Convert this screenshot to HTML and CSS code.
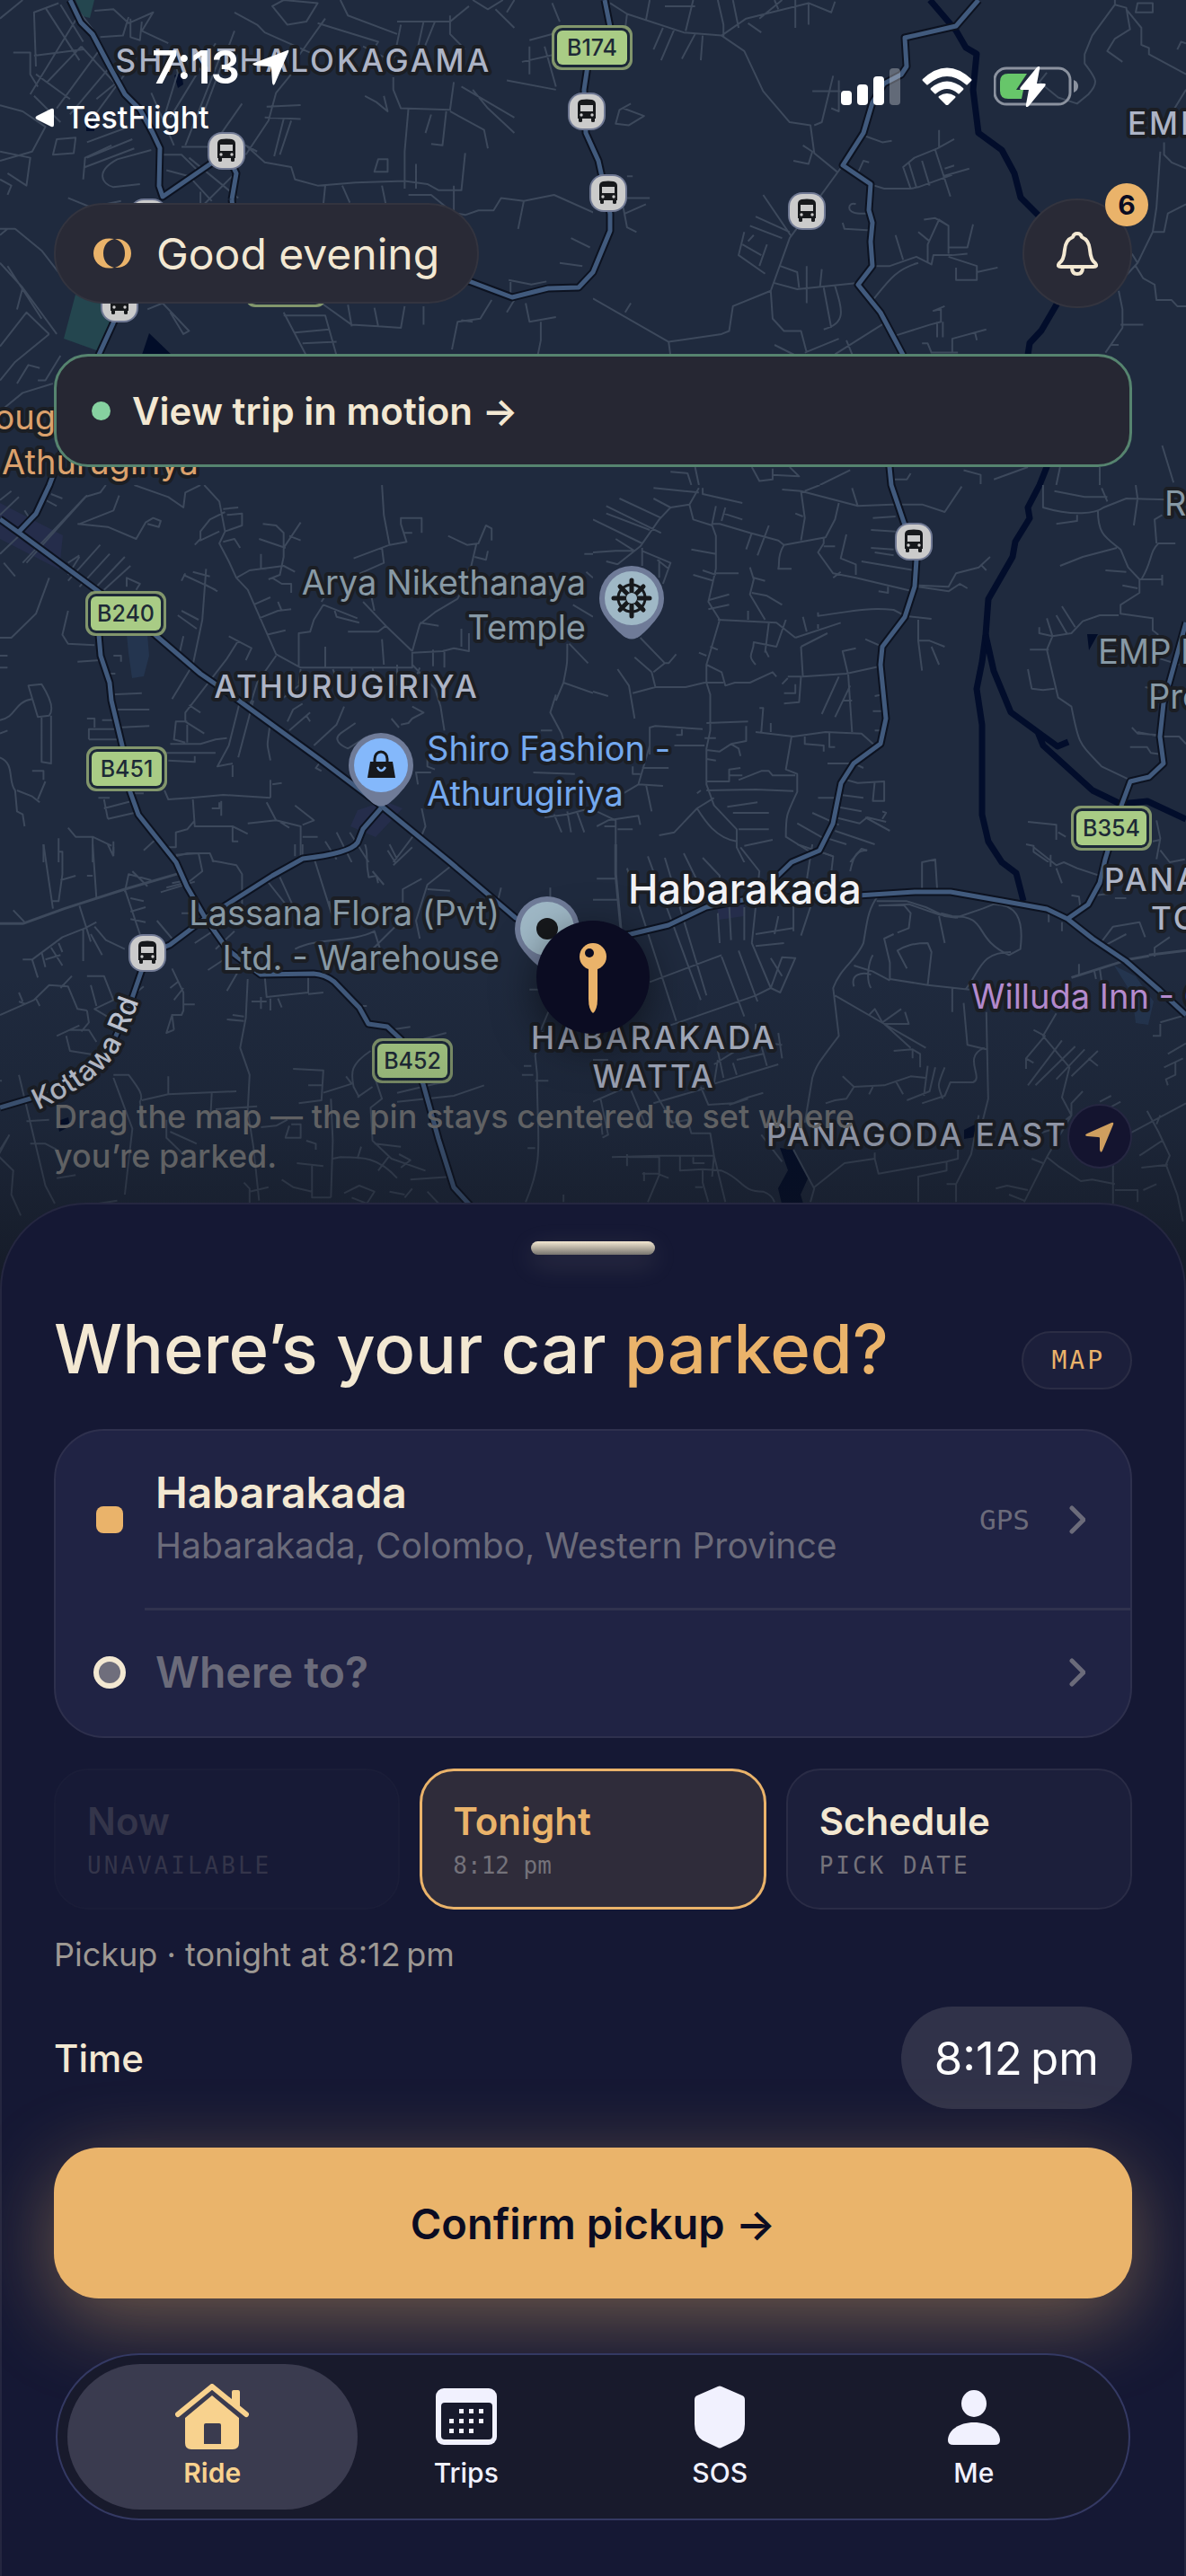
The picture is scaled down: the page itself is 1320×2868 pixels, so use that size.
FILE: index.html
```html
<!DOCTYPE html>
<html lang="en">
<head>
  <meta charset="UTF-8">
  <meta name="viewport" content="width=device-width, initial-scale=1">
  <title>Ride</title>
  <link rel="stylesheet" href="styles.css">
</head>
<body>
<div class="screen">

  <main class="stage">
    <!-- map background -->
    <svg class="map" viewBox="0 0 1320 1440" preserveAspectRatio="xMidYMin slice" aria-label="Map around Habarakada">
      <defs>
        <symbol id="bus" viewBox="0 0 44 44">
          <rect x="1" y="1" width="42" height="42" rx="16" fill="#6f7893"/>
          <rect x="3" y="3" width="38" height="38" rx="14" fill="#cbcbcb"/>
          <path fill="#17191c" d="M12 14q0-4 4-5 6-1 12 0 4 1 4 5v16h-1v3q0 1-2 1t-2-1v-3H17v3q0 1-2 1t-2-1v-3h-1z"/>
          <path fill="#cbcbcb" d="M15 15h14v7H15z"/>
          <circle cx="16" cy="26" r="1.700" fill="#cbcbcb"/>
          <circle cx="28" cy="26" r="1.700" fill="#cbcbcb"/>
        </symbol>
        <symbol id="shield" viewBox="0 0 90 50">
          <rect width="90" height="50" rx="11" fill="#82966c"/>
          <rect x="3" y="3" width="84" height="44" rx="9" fill="#1c2838"/>
          <rect x="6" y="6" width="78" height="38" rx="6" fill="#a9cc85"/>
        </symbol>
        <path id="pin" d="M36 0a36 36 0 0 1 36 36c0 14-8 23-16 32-6 6-10 10-14 12q-6 3-12 0c-4-2-8-6-14-12C8 59 0 50 0 36A36 36 0 0 1 36 0z"/>
        <path id="kottawa" d="M42 1236Q108 1206 130 1172Q146 1142 160 1098"/>
        <linearGradient id="fade" x1="0" y1="0" x2="0" y2="1">
          <stop offset="0" stop-color="#10131c" stop-opacity="0"/>
          <stop offset=".5" stop-color="#10131c" stop-opacity=".2"/>
          <stop offset="1" stop-color="#10131c" stop-opacity=".68"/>
        </linearGradient>
        <g id="main-roads">
          <path d="M78 0L90 25 103 38 122 74 139 105 156 122 170 148 178 165 177 207 181 219 229 186 252 170 263 193 258 222"/>
          <path d="M258 222L262 260 400 290 522 313 570 331 610 321 644 320 660 303 679 257 679 238 666 179 652 148 650 100 656 60"/>
          <path d="M681 40L673 0M133 340L126 360 110 395 55 540 40 572 21 592"/>
          <path d="M0 578L21 593 109 658 173 707 223 750 252 770 358 847 424 897 501 960 574 1022 640 1050 702 1040 744 1030 786 1010 837 1000 955 997 1018 993 1058 993 1115 1003 1165 1012 1188 1023 1216 1045 1253 1070 1291 1103 1320 1130"/>
          <path d="M424 900L404 923 398 938Q390 950 337 956L303 975 229 1022 189 1052 164 1062 145 1117 126 1160 101 1193 34 1223 0 1233"/>
          <path d="M110 707L112 730 122 760 124 780 136 830 145 882 154 907 196 960 208 987 229 1023 253 1057 290 1085 349 1084Q362 1085 372 1093L400 1122 410 1140 431 1143 446 1157 471 1207 488 1268 505 1322 526 1345"/>
          <path d="M1089 0L1064 29 1007 42 1009 74 1003 83 984 93 971 114 961 148 938 184 969 205 967 234 971 248 969 269 971 296 955 317 980 348 1005 395 990 520 992 540 1020 623 1018 653 1007 687 982 720 980 740 986 800 980 828 950 850 936 872 927 917 912 947 881 960 850 990"/>
          <path d="M1320 693L1295 783 1291 820 1295 850 1279 865 1258 870 1248 897 1230 957 1224 983 1211 1007 1188 1023"/>
        </g>
      </defs>

      <rect width="1320" height="1440" fill="#1f2a3e"/>

      <!-- parks, water and built-up areas -->
      <path class="park" d="M84 328l53 9-27 54-39-14zM84 0h21l-5 20-8-2z"/>
      <path class="pond" d="M141 706h23l2 24-6 23-13 2-4-28zM1240 1075l24 12 20 28-6 26-14-2-4-32z"/>
      <path class="town" d="M0 560l70 36-4 38L0 600zM398 902l30-10 20 8-30 32-28-12zM798 1008h30v12l-28 4z"/>
      <path class="lake" d="M868 1278l15 2 17 30-9 20 3 10h-24l-4-17 11-20zM158 395l8-24 25 24zM1210 706h12l-10 18zM64 1248l12-4 2 10-12 6zM194 84l8-4 2 14-6 4zM1073 1258l12-6v14l-12 2zM96 135h9v11h-9z"/>
      <path class="river" d="M1035 0L1064 34 1075 53 1087 60 1083 100 1089 148 1115 167 1129 193 1136 220 1157 241 1190 290 1176 339 1159 368 1146 382 1144 395 1165 520 1157 540 1144 565 1146 577 1130 603 1127 620 1100 667 1097 707 1093 737 1087 767 1093 807 1093 907 1100 937 1115 960 1131 972 1139 1003"/>
      <path class="river" d="M1097 707L1106 747 1125 793 1155 815 1161 830 1216 880 1247 895 1277 892 1320 912M1155 815l22 16 12-5"/>

      <svg x="0" y="0" width="660" height="540" viewBox="0 0 1568 1568" preserveAspectRatio="none">
        <path class="street" d="M0 60l60-60M95 215L90 40 155 10M120 25l90 170M160 15l60 120M185 0l60 95M90 180l130-20M250 35l50-5 40 45 65-35-30 60 70 40M265 120l60-5 15-60M345 60v60l25 10 5-60M80 305l130-260M95 240l90 80M125 265l90-115M215 150l90 120-50 50M150 350l120-200M185 370l110-160M240 390l90-150M160 395L90 310M35 170h45v70l20 40M0 340l60 20 60 50-35 80-85 30M0 490l80 20-10 90-50-40M140 500l10-50 50-5-5 50zM225 540l130-60M230 510l120-60M230 460l110-50M220 580l5-70 70-40M400 485l-90 30c-60 40-40 80-10 90l70-10M430 395l40-160-10-60M400 300l60 170M450 380l120-240M490 470l90-280M540 360l80-260M480 475h80l80-140M500 510l130 130M440 550l60 20 60 80M430 500h50l50 60M540 660l90-110M650 500l60-110 20-90 60-90M680 490l-30-20 50 55 70 15 10 40 60 20 100-10 130-5 60 10 30 20h60l10-120M700 380l95 5M705 345l90-5M750 385l-25 120M770 390l-30 110M1070 610v-120l10-140M1040 250v40l20 60 130 5 10-90M1180 360l-10 110-30-5M1140 370l-15 60M1190 360l90 60 10 60M1250 290l40 60 70 80M1220 280l140 100M1340 260l130 30M965 310l30 20 30 30-10-50M1000 515h25v40h-35zM1010 600l10 60M1100 530v80M1200 600v90l-60-60h-60M860 600l-5 60M905 600l20 55M720 20l30-20 90 10-30 60-50 10zM840 75l160 60-40 80M860 60l-70 120M900 0l20 50 130 60M620 40l60 40 20 25 120 65M1050 70h140l50-50M1190 50v60l40 50M1060 80l-20 120-80-50M1120 70l-20 110M1150 70l-30 90M1250 0l40 30 40-30M1310 30l50 60M1360 0l-20 40M1400 130l90-30M1400 150v90M1380 200l110-30M1460 10l20 60M1440 150l30 130M1210 690l20 5 35-15h40l20-40 60 10 80-20 110 60M1385 650l-15 90M1510 770l50 30M1480 850l60 10M750 1010l60 140M750 1020h110l30 130M780 1075l90-10M800 1110l90-5M850 980l80 70 70 5-10-60M930 1055l-10-70M1070 990l-10 70-60-5M1120 1050v-60M1345 905l60 15 40-10M1350 905v50M1300 970l-30 60-60 10-15 90M1250 1040l-30-5M1390 980l10 60 70-15M0 740l40 0 70 70 70 110M0 850l60 80 90 150M20 860l90 170M60 930l-15 70M0 1120l70-110 60 70M0 1230l40-60 90-90M45 1240l30-60 30 10M100 1230h20l40-80M0 760l20-20M0 580l30 20-10 30M180 640l60 30 80-20M530 660v-40M430 980l70 90-15 10-35-70M390 1000l40-20M1340 1010l20-40M1430 1040v60l-10 60M0 1330l60-60 80-30"/>
      </svg>
      <svg x="660" y="0" width="660" height="540" viewBox="0 0 1568 1568" preserveAspectRatio="none">
        <path class="street" d="M45 10l45 35 150 60 100 10 65-55L570 10l60 30 10-35M340 115l60 50 50 130 70 100 55 10 10 90 60 60M345 120V80l-15-80M90 45l-5 50M150 0l-10 65M270 20h-80M265 0l-20 100M185 90l-25 70M215 95l-35 100M270 110l-35 80M290 115l-5 80M370 0l15 90M410 75l35 30M440 60l60-60M490 30l-10-30M535 0v90M570 10v70M585 405l20-10 30-150M580 295h75M650 260v100l-20-10M530 520l40 10 10-40-25-20M660 535L520 770l-50 170-100 50-10 80-20 10-140 25-200-140M200 1105l5 45M85 1010l15-30M470 940l5 90 30 40h45l15 70M480 915l60 20 160-20M545 930l-5-50-45-20M565 980V860M600 930l5-60M610 930l20 130M640 925c20 80 30 120-30 140M525 765L450 630M520 750l-90-50M500 770l-85-40M400 750l-15 75 70 60M395 790l50 35M440 860l20-70M410 780l15-20M730 595l40 15 70 0 20-5 90-40M840 610l-20-70 30-30 60-30 45-30M905 485l40 150M870 520l20 80M835 525l20 80M915 420v60M735 690h-30c-40 0-30-40-10-30M735 745l-70-5-5-20M720 440l45 20 25-5M700 560l15-40 15 5M925 570l70-25M930 545l25-10M800 760l20 80M740 860h45l70-30 40 25 5-30h50l40-5M860 850c-60 20-80 60-120 120M885 850v-60l30-80 25 20v90M940 800h50l15-75M875 710l30-5 35 25M860 750l30 30M940 830l75 30v45h-55v-40M1015 880l55-15M640 1145l130-100M690 1160l-20-60M800 1085l90-35 30-10v-40l-20 5 30-15M910 1040v50M925 1040v50M560 1140l90-45M950 1140v-45l90-30M1010 1075l5 25M870 1110h15l10 30h70M480 1115l65 40M1380 0v15l30 10 10 70-40 30-20 40 40 35M1380 15l-60 100-20 60 0 30c30 50 40 60 10 100l-30 30-50-20-50-50 20-30M1410 30l40 60v55l20 10 0 20 98 65M1440 10h40v30h-45zM1545 160l10-25 13 5M1510 460v40l20 25 38 20M1500 490l-10 180-10 80-40 100-30 40M1440 850l-15-30M1480 750h30l10-60 48-30M1435 860l20 40 30 20 5 50 40 0 15 20h23M1390 940l10 60v60l-45 80M1395 1050h60M1370 1115h20M1150 1510l-90 40M420 1510l20 45 35-5v-35M520 1510l25 30-70-5M270 1510l10 58M1505 1440l30 120M1340 1510v58M205 1525l45 5 10 38M1235 1510l-10 58M840 1530l-10 20h-40M980 1520l45 15v30M680 1520l-80 48M1568 290l-30 60M90 570h15M80 350l55 25-40 30-35-5 10-45 30-20M75 640h75M85 690l55-30M80 670l10 65 25 15"/>
      </svg>
      <svg x="0" y="540" width="660" height="420" viewBox="0 0 1568 1260" preserveAspectRatio="none">
        <path class="street" d="M280 0l-15 25-40 15L60 260M230 35L70 260M205 130l80 10 75 40 25-55 20-15 20 10-5 20-30-10M210 130l90-45 15-50M135 30l30 15M120 50l30 20M355 0l90 40 40 35 5-50 40-25M540 0l40 55 15 100-15 40 25 60 20 55 30 40 75 215 65 45h295l0-50 80-5 30-10 40 10v-60M595 90l-40 25-25 40v30l50-30M590 80l40-5M600 100l40-5v40l-45 20M530 180l-15 20M590 190l30-10 15 30M625 310l35-25 90-15 30 20M695 130l35 5 20 25v80l-10 60-30 15M750 210l45-85M685 180l70 30M765 170l30 15M690 230v50h15M720 310l25 20h25v30M670 400l45-25M685 445l50-25 35-5M705 500l50-15M735 390l10 30M1010 0l5 100 15 100 45-10-15-60v-20h55v50M1065 160h25M1030 200l-95 45M1010 210l5 50-80 45M1185 170l50 30 30-5 20-60 15 10v40M1260 195l-15 80-45 60M1255 240l30 10 5-30M1230 330l-20 50-60 45-40 40-20 90M1110 460l50 10M960 390l60 80 70 85M990 420l-10-60M1020 470l-20 20h-80M855 400l90 45M885 420l5 20 60 20M855 400l-25 50-10 40-30 5v110M850 390l50-100M860 610v-70M1015 600l-5-85M1145 550v55M1175 550v60M1220 540v-60M795 615l-5 50M880 615l20 60M930 610v60M985 610l10 60M1050 600v70M1090 600l60 80 15 60 10 80M1110 610l-20 60M730 570l-50 90-20 80M740 720l60-60M760 790l15-40 25-20M910 740l-20 60-60 70M820 760l-55 60M810 770l10 20M1090 740l30 20-30 20-10 15-20 5M1035 780l20 30M940 795l-40 35c-20 20 0 40 20 50l50-40M850 920l-15 25 15 10M545 280l-10 170-25 150-55 115M485 300l85 50M510 290l45 15M540 330l35 25M480 420l45 30M470 435l50 45M485 505l-10 55M605 505l60 40-15 40M630 520l-30 60-110 180v30l50 40M500 735l30 25M635 720l-30 150-30 70 40-10M670 720l-40 190M715 790c-10 100-10 60 0 130M495 790h-30l-5 60 30 10M450 865h80l40-15 30-5M440 895h130M495 860v-60M445 920l70 5v-20M615 935v40M435 1020l10 30 60-5 85-10 125 10M510 1050l5 90h100l40 25M560 1080h20v-20M585 1055v50M615 1140v50h15M715 1045v-60M720 1000l25-5M705 1060l25 60 65 20v110M655 1130l75-10M780 1070l50 50-30 15M740 1125l25 20M800 1175h40M890 1160l40 100M860 1190l30 60M925 1160l50 100M1030 1200l20 50M1100 1160l-60 100M1115 1080l10 60-10 30M1105 1000l-5-40h40M1130 900v40l20 10M265 200L180 320M290 230l-80 110M330 240l-90 120M345 270l-70 80M335 340v-30l35 20-10 20M210 240l-30 60M180 260l30-25M130 310l-35 120-65 80-30 0M180 420l-15 80 15 30 70 5M205 590l60-5M300 570h20v20M295 700l80-5M305 750h90M310 810l85-5M230 780h20v30M235 850h75M235 850v-35h80M270 785h45M285 630h20M75 670l35-5c30 60 30 90 20 105l-30 5zM110 775v150l25 5V770M85 955h30v30M85 715c-50 10-40 60-85 70M0 830l20-10M0 570h20M0 610h20M0 910c40 20 20 80 40 110l5 70 15 10 5 40M45 1020l40 20 20 20M120 990l-20 60M115 1200v60M180 1145l20 30h45v85M245 1175l50 30M300 1190v40M155 1180v80M465 1240l30-10h60l10 30M440 1210h25v-50l30-10 20-30M380 1220l35-40M260 1045h30M275 1080l75-25M285 1115l70-20M275 1050l10 65M350 1030h30M1470 700l-15 60 30 70 20 90M1500 530c0 80 0 60-10 130l-20 60M1490 660l78 35M1505 530l50 65M1550 290l18 20M1515 400l53 40M1545 230h23M1430 820h30M1410 960l110 5M1440 1110l60-10 60-20M1465 1100l20 60M1500 1090l10 70M1525 1090l20 70M10 260l30 45M0 230l50-60M0 50l30-30M50 40L0 100M65 85l10 20M480 320l10-25"/>
      </svg>
      <svg x="660" y="540" width="660" height="420" viewBox="0 0 1568 1260" preserveAspectRatio="none">
        <path class="street" d="M280 10l-25 55 10 50 50 20 10 35v110l-20 110 30 60-35 150 0 60 10 40 0 120-10 60v120l20 70 60 80 0 60 40 100M255 65l-50 10-30 40-50 90-60 60M160 10l120 15M290 10v20l105 30M70 45l110 65M160 45l45 30M35 70l145 90M35 95l115 55M0 115l130 80M0 225l60-5 50 0M60 180l50 40M130 210v60M130 220l75 40-20 70M170 250l30 30M175 250v60M35 255l30 10M260 215l65 15M290 285l35 15M265 300l55 20M325 295h60M305 385l55-20M305 415l55-15M325 70l-10 60h20l80 30 75 25 15 15 110-25 25-60 10-55M350 75l-10 45M345 95l50 20M420 160l-15 55M465 135l-15 50-15 50M505 200c-20 40-10 60-15 80h35M535 95l20 10M550 20l10 90-10 75M550 20l150 50 90-5h80l60 25 45-85M560 20l40-20M500 15l50 5M685 10l15 60M610 175v20l-15 30 40 70 60 15 150 45M670 165l-15 80 40 20v35M610 205h30M635 310l20-20M755 355l25 5v-20M740 110l60-5M735 150l65 5M735 210l60 5M745 225l50 10M710 255l140 30M860 340l80 15 30-25 20 15M860 335l80 5 20-45 60-20 30-35M1025 265l15 20M415 275l10 40-10 50 40 85M425 310l30 10M420 360l40 10 40 30M330 450l155 10 50 50M410 420v30M465 460l-10 100M510 450l-25 90-60-15c0 40-20 40 5 75M455 550l10 25M535 510l120-50M550 540l70-45M555 440l10 50M595 465v15M595 425l0 12c70-10 120-30 200-20l30 20 70 10M860 450v70l10 100M860 520h30l40 20M895 540l20 60M720 515l45 25M550 540l5 100 115-10 90-25M515 640h35l-5 85-40 5M535 665v30h-30M500 665l15-20M695 545l-35 10 15 80 10 190M650 640l-45 125M680 670l-40 105M660 720h25M745 705l20-5M740 755h35M280 560l20 10M310 540l20 10M300 600l40 25 10 45 25-10h40l60-35 10 15M295 660l-50 15h-80l-60 20M295 660h50M165 675l-10-50M125 510l65 85-30 30M110 575l45 50M190 595h10l20-30M65 615l30 55 15 110M0 690l40 15M300 795l110-5M440 745h10l-5 80M470 795v30M430 825l100 15 85-15 95 5 40 45M625 825v50h15M560 840v25l50 5v20M525 840l-15 110 30 15v60c-30 80-30 80-30 150l70 55M745 820h20M405 805v50l-40 10M300 885l35 5 30-25 20 15 5 25M300 915l25 5M295 845h30M150 900V810l15-5 125 10M235 815v20h-15M215 870h80M150 870l-30 130-40 30M130 945h70M120 1000l65 5M140 1000l15 90M105 940v25h20M300 1020l130-3 100 5M275 1030l10-10M300 990h60v-40l30-5M360 970h35M385 985l60-30h20l10 15h60M320 1045l-45 35-60 80-40 10M275 1080c20 40 50 100 105 110M355 1075l80-15M370 1095h95M385 1150h80M400 1205l75-20M60 1260v-140l-50-30M10 1140l30-20 80-15 5 30M30 1140h30M65 1150h40M595 1045h50M580 1095l70 40M540 1130l70 50M645 1075l65 15M640 1110l65 20 20-20 50 15M640 1155l105 45M720 1110l65 45M670 985l30 10 70-5v65h-30l5-65M620 930h70M690 930l25 15M655 1035l60 10M765 1090l10 5-10 20M620 1180l50 20M590 1220l45 20M680 1260l30-45 15 5M1190 0v75c80 30 140 20 160 0l60-30 158 5M1220 20l80 20h60M1280 100v20l-55 10M1345 10l15 45M1435 0l5 45-10 90M1335 85c0 80 20 90 60 130l20 60 30 40v45l-50 40v30l85 15v40l15 15M1385 210l-90 30-60 30M1355 285l55 5M1400 335l40 10M1445 315h60M1450 315c30-60 20-90 45-120h45M1490 195l-5-80 20-15M1505 300v35M1215 505l-15 45 30 160 35 30c20 130 20 120 80 200l75 45M1215 505l-35-10v-20M1215 505l50-10 30-40 45-20h50M1200 445l15 60M1225 435l30 65M1240 405l35 70M1155 550h50M1150 615l10 65 30 5 30-5M1425 810l15 20 55 5M1440 825l60 15 50 0 18 25M1420 875l45 0 10 20 30 5M1150 1125l75 10v50M1230 1160l20 15M1145 1200l20 5 0 20 40 35M1490 1120l10 60-10 70M1500 580l50 20M1460 675l20 5M1480 1190l20-5"/>
      </svg>
      <svg x="0" y="940" width="660" height="420" viewBox="0 0 1568 1260" preserveAspectRatio="none">
        <path class="street wide" d="M0 265h60l110-50 160-65 150-55"/>
        <path class="street" d="M115 0l25 215M155 25h10v75l-10 90h-20M160 120l40-15M245 0l10 180M230 105h15M285 0l15 40M300 10v30M210 205l30 120M330 150l40 150M330 160l10-60 60 20M350 90l40 50M345 180l35 10M345 225l40-15M345 250l40 10M415 255l40 60M425 160l90-35M440 145l60-20M455 130l40-10M465 35l60-5 10 60-40 40M560 55l25 5 40 10 15 30v100l15 70M705 120l50 80M740 110l40 110M830 45l50 200M780 0v40M800 0v40M620 290l-50 60M610 370l-60 50M650 380l-50 110M515 330l60-50M480 230h60M65 260l-30-40M60 385l25 0 80-75 60-30 30-20M85 385l15 60M110 360l10 50M135 345l30 60M155 330l10 30M250 275l30 45 50 30M220 280l0 110M240 300l30 70M120 385l40-15M0 570l90-50 40-50 50 5 25 75 25 5M230 440l45 0 25 80-50 30 80 60M240 470l15 70M160 480l30-40M50 495l10 30M70 535l-20-10M95 515l10 25M230 555l5 40-20 30M185 620l50 0 20 40M175 640l10 50 100 20M150 640l60-35M380 475l-40 40M455 415l30 80v60l-5 15-25 0 5 50M485 535h30M455 570l-15 60 20-10M470 460l-20 20M655 450l-5 130-15 100 25 90-5 120 15 120 15 180M600 585l45 5M615 570l30 5M700 440l5 70 110-15v-60M665 525h40M690 550v-40M715 515v40M735 515l10 30M815 500l40-5M950 540h20M965 0c10 30 0 50 10 110l20-5 5 25M985 90l30 45M1025 20l20 40M1090 10l-50 60M1190 75l-60 60-30 120 10 60M1065 210v-60l50-35M1130 150l60 5M1065 250l-80 100M780 350c60-40 150-20 210-60l15 60M870 190l10 55M1325 145l-10 50M1455 145v50M1430 620l20-60M1400 485h30M1030 620l55-10M1120 650l60-20M775 750l80 5-5 100-60 10M815 805h40M855 830l75-30-15-25M980 690c-60 50-50 80-45 120l15 35M990 775l20 75-30 30 5 110 50 60 90 40M985 810l-40 35M1050 830l100-30 25-5M1050 860l150-20 80-35M375 855l70-20 180-10M445 775v60M560 830l-5 120M570 885l110-10M300 770h40c30 50 40 70 30 90l10 75M300 780l50 170-20 220M50 770l70 370 25 60M80 1000h40l30 20M70 925l60-5M25 970l-30 70 40 50-5 80 25 70M150 1115l50-10M440 920v60l40 50M450 960l70 40M770 935l25 0v45h-40l10-40M810 990l25 10v20M690 945l40-5 30-20M875 850l5 140-5 190M880 1050l20-5c60 0 100 0 150 70M955 1010l-10 40M990 1000l70 10M1060 1080l25-25-30-20M1000 1090l30-50M785 1065l70 10M825 1070v110l50 0M645 1130l15 20v50M660 1160l50-15M745 1120l30 25 50 15M910 1165l40-25 40 20-20 40-40-20M1030 1160l40 10M1085 1120l110-10M1090 1150l-20 30M1130 1160l30 40M1490 1170v25M1390 1195c50-150 30-200 30-430l-5-60 20-80M1380 770h30M1385 740h20M1415 790h35M1395 1015h20M460 520l25-40M0 1020l20-40M0 790h5M260 1200l50-10"/>
      </svg>
      <svg x="660" y="940" width="660" height="420" viewBox="0 0 1568 1260" preserveAspectRatio="none">
        <path class="street wide" d="M1265 445l150-60 55-12M60 0v100l15 200M1470 370l98-15"/>
        <path class="street" d="M10 115h50M0 185h65M90 80l130 510M145 40l140 480M190 45l110 460M240 30l70 180M290 45l45 60-5 80M150 460l190-90M170 620l260-115 40-25-50-150 20-240-50-80M340 375l60 200M385 355l50 170M470 380l30 60M470 480l25 15 40-115-35-3zM430 300l100-20M430 340l75-10M490 240l-10 60M530 140v150M580 190l-30 115M360 200l5 120M400 210v110M330 230l5 100M500 130h90M580 0l-25 200M540 0l95 40-10 110M680 90c10-60 20-70 45-70M870 155V60l35-10 5 100M755 170c-30 50-30 90-40 160-20 60-60 80-80 150l15 160c-60 100-60 100-70 140l-20 150M750 190h80l50 20 50 30 30 5 70-30 30-15c60 0 80 50 70 150l-30 20c-100-60-50-130-150-130l-30-10M755 205l80-5 80 35 50 10M820 200l20 30-5 50-30 15M795 300l-25 15 15 80v55l100 20 110 15M1105 360c-80 0-80 60-120 125M885 470l10-110-10-30c-40 0-60 10-80 25l25 60M690 405l50 20 45 30M740 370c-10 20-20 80-5 110M690 475c-10-40 20-50 45-40M640 505l130 95 70 80M770 600l110 80M730 570l15-20 20 45 50-45M770 600l65 0-10-40M795 690l50-5v30M845 685l20 15v45M950 480v80M980 530l10 140 50 15M1040 560l5 290-20 100M1035 680c-60 30 0 100-30 115l-60 0-15 45-60 25M660 775l30 35 80-5 70-30 40 5M690 810l-20 40-30 5-25 10M740 810l-10 25M800 790l20 45M885 740l-10 100M905 745l-15 80-60 30M930 745c-20 60-20 60-5 105M915 240l15 90M1205 220v40M1240 260v30M1285 400v35M1325 420l5 30M1340 415l5 45M1345 325l30-50 70-15 15 50M1350 340l60-40M1485 375v-30l40-35M1265 170l20 5 5 50M1165 10l60 60 20-10 35 20 60 25M1210 35v40M1225 80l15 50M1330 170l35-5M1380 180h30M1500 20l25 40 40-10M1225 565l-35 75 70 105-20 100 25 60-45 45-40 15M1165 620l30 20-50 75v35M1145 715l20 15M1240 655l-90 150M1275 675l-105 130M1300 685l-75 100M1335 690l-70 85M1310 715l25 25M1295 825l-30 40v40M1340 860l30-20M1365 880l30-20M0 720h40M0 860l90-50M20 850l20 120-15 10M160 820l50 110 40-10 10 45h50l10 75-5 70M100 820l40 120M160 865l135-50M360 870l50-20M285 810l20 60 65-5 40-20 40-15M320 800l170-65M390 680l-70 55M330 690l15 90M370 730l10 40M440 650l20 90M330 720l-10 80M430 600v60M490 630l10 85M470 665l30 5M380 720l70-20M25 970l-5-60M50 1045l120-5 60 0 90 0 30 155M90 1035v40M95 1045l80 0v60l-30 90M230 1040v50l60-5 50 5c60 30 50 70 110 70 20 10 25 20 30 35M265 1045v20h30M135 1125v-30M130 1100h40l30 15M290 1090l0 40 15 65M270 1145h20M445 970l55 90M530 1020l55 130-10 45M585 1145l80-80 80-15v-20M745 1050l10 50 180-40v30l-75 20v85M935 1060l30-10v-60M960 1195v-60l40-100 20-130M935 1135h25M1265 905l-65 140-60 150M1200 1045l30 30 60 50 30-5 60 15M1375 1070v130M1380 1155h60v40M1065 1150l30-10 55 15M1100 1170l40 20M1160 1050l30 15M1420 965l148-100M1465 890l30 70 30 80-10 30 30 100 15 90M1505 990l-60 50M1490 935l10-30M1450 1080l70-10M1455 1155l35-20M1520 700l48-35M1510 745l50-30M1540 730v40l-25 15 5 20M1500 595l68-25M1500 600v40h-20"/>
      </svg>

      <use href="#main-roads" class="road-case"/>
      <use href="#main-roads" class="road"/>

      <use href="#bus" x="230" y="146" width="44" height="44"/>
      <use href="#bus" x="143" y="220" width="44" height="44"/>
      <use href="#bus" x="111" y="316" width="44" height="44"/>
      <use href="#bus" x="631" y="102" width="44" height="44"/>
      <use href="#bus" x="655" y="193" width="44" height="44"/>
      <use href="#bus" x="876" y="213" width="44" height="44"/>
      <use href="#bus" x="995" y="581" width="44" height="44"/>
      <use href="#bus" x="142" y="1039" width="44" height="44"/>

      <use href="#shield" x="614" y="28" width="90" height="50"/>
      <use href="#shield" x="273" y="292" width="90" height="50"/>
      <use href="#shield" x="95" y="658" width="90" height="50"/>
      <use href="#shield" x="96" y="831" width="90" height="50"/>
      <use href="#shield" x="1192" y="897" width="90" height="50"/>
      <use href="#shield" x="414" y="1156" width="90" height="50"/>
      <g class="route">
        <text x="659" y="62">B174</text>
        <text x="140" y="692">B240</text>
        <text x="141" y="865">B451</text>
        <text x="1237" y="931">B354</text>
        <text x="459" y="1190">B452</text>
      </g>

      <g class="area">
        <text x="338" y="80" text-anchor="middle">SHANTHALOKAGAMA</text>
        <text x="386" y="777" text-anchor="middle">ATHURUGIRIYA</text>
        <text x="728" y="1168" text-anchor="middle">HABARAKADA</text>
        <text x="728" y="1211" text-anchor="middle">WATTA</text>
        <text x="1021" y="1276" text-anchor="middle">PANAGODA EAST</text>
        <text x="1229" y="992">PANAG</text>
        <text x="1281" y="1035">TO</text>
        <text x="1255" y="150">EMB</text>
      </g>
      <g class="place">
        <text x="652" y="662" text-anchor="end">Arya Nikethanaya</text>
        <text x="652" y="712" text-anchor="end">Temple</text>
        <text x="556" y="1030" text-anchor="end">Lassana Flora (Pvt)</text>
        <text x="556" y="1080" text-anchor="end">Ltd. - Warehouse</text>
        <text x="1296" y="574">R</text>
        <text x="1222" y="739">EMP P</text>
        <text x="1278" y="789">Pro</text>
        <text class="shop" x="475" y="847">Shiro Fashion -</text>
        <text class="shop" x="475" y="897">Athurugiriya</text>
        <text class="food" x="62" y="478" text-anchor="end">Doug</text>
        <text class="food" x="2" y="528">Athurugiriya</text>
        <text class="hotel" x="1081" y="1123">Willuda Inn - C</text>
      </g>
      <text class="town-name" x="699" y="1006">Habarakada</text>
      <text class="street-name"><textPath href="#kottawa">Kottawa Rd</textPath></text>

      <!-- place pins -->
      <g transform="translate(388 816)">
        <use href="#pin" fill="#6f7b98"/>
        <circle cx="36" cy="36" r="30" fill="#84b8fb"/>
        <path fill="#17191c" d="M24 32h25l3 18H21z"/>
        <path d="M29 33v-4a7 8 0 0 1 14 0v4" fill="none" stroke="#17191c" stroke-width="3"/>
        <path d="M32 38q4 8 9 0" fill="none" stroke="#84b8fb" stroke-width="2.500"/>
      </g>
      <g transform="translate(667 630)">
        <use href="#pin" fill="#6f7b98"/>
        <circle cx="36" cy="36" r="30" fill="#9fb8c6"/>
        <circle cx="36" cy="36" r="15" fill="none" stroke="#17191c" stroke-width="3"/>
        <path d="M36 16v40M16 36h40M23 23l26 26M49 23L23 49" stroke="#17191c" stroke-width="5" stroke-linecap="round"/>
        <circle cx="36" cy="36" r="6" fill="#9fb8c6"/>
      </g>
      <g transform="translate(573 998)">
        <use href="#pin" fill="#6f7b98"/>
        <circle cx="36" cy="36" r="30" fill="#9fb8c6"/>
        <circle cx="36" cy="36" r="12" fill="#17191c"/>
      </g>

      <rect y="1080" width="1320" height="360" fill="url(#fade)"/>

      <!-- centred pickup pin -->
      <g class="pickup-pin">
        <circle cx="660" cy="1088" r="63" fill="#0b0c22"/>
        <circle cx="660" cy="1065" r="15" fill="#eab36a"/>
        <path fill="#eab36a" d="M655 1076h10v36q0 12-5 16-5-4-5-16z"/>
        <circle cx="656" cy="1061" r="5" fill="#0b0c22"/>
      </g>
    </svg>

    <div class="status">
      <div>
        <div class="clock">7:13
          <svg width="42" height="42" viewBox="0 0 42 42"><path fill="#fff" d="M39 2q2-1 1 2L25 39q-2 4-3-1l-1-16q0-2-2-2L3 19q-5-1-1-3z"/></svg>
        </div>
        <a class="back" href="#">
          <svg width="21" height="22" viewBox="0 0 21 22"><path fill="#fff" d="M18 1q3-1 3 2v16q0 3-3 2L2 13q-3-2 0-4z"/></svg>
          TestFlight
        </a>
      </div>
      <div class="signals">
        <svg width="66" height="42" viewBox="0 0 66 42" fill="#fff">
          <rect y="26" width="12" height="16" rx="4"/>
          <rect x="18" y="19" width="12" height="23" rx="4"/>
          <rect x="36" y="10" width="12" height="32" rx="4"/>
          <rect x="54" y="1" width="12" height="41" rx="4" opacity=".3"/>
        </svg>
        <svg width="58" height="42" viewBox="0 0 58 42" fill="#fff">
          <path d="M2 13Q29-12 56 13q1 1 0 2l-4 4q-1 1-2 0-21-18-42 0-1 1-2 0l-4-4q-1-1 0-2z"/>
          <path d="M11 23q18-15 36 0 1 1 0 2l-4 4q-1 1-2 0-12-10-24 0-1 1-2 0l-4-4q-1-1 0-2z"/>
          <path d="M20 32q9-6 18 0 1 1 0 2l-8 8q-1 1-2 0l-8-8q-1-1 0-2z"/>
        </svg>
        <svg width="94" height="46" viewBox="0 0 94 46">
          <rect x="1" y="3" width="84" height="40" rx="13" fill="none" stroke="#8b929f" stroke-width="3"/>
          <path fill="#8b929f" d="M89 16q5 2 5 7t-5 7z"/>
          <path fill="#67c66a" d="M16 9h21L25 27h8l-2 10H16q-9 0-9-9V18q0-9 9-9z"/>
          <path fill="#fff" d="M48 2q4-3 3 2l-3 16h8q3 0 1 3L39 45q-4 3-3-2l3-16h-8q-3 0-1-3z"/>
        </svg>
      </div>
    </div>

    <header class="topbar">
      <div class="greeting">
        <svg width="42" height="34" viewBox="0 0 42 34" fill="#eab36a">
          <path d="M23 1C9-2 0 7 0 17s9 19 23 16C15 31 11 25 11 17S15 3 23 1z"/>
          <path d="M24 1c9-1 18 5 18 16S33 34 24 33c7-2 11-8 11-16S31 3 24 1z"/>
        </svg>
        Good evening
      </div>
      <button class="bell" aria-label="Notifications, 6 unread">
        <svg width="46" height="50" viewBox="0 0 46 50" fill="none" stroke="#f3e8d2" stroke-width="4" stroke-linejoin="round">
          <path d="M23 3q-4 0-5 4-8 3-9 14-1 12-6 15-3 4 2 4h36q5 0 2-4-5-3-6-15-1-11-9-14-1-4-5-4z"/>
          <path d="M17 41q0 7 6 7t6-7"/>
        </svg>
        <span class="badge">6</span>
      </button>
    </header>

    <a class="trip" href="#"><span class="dot"></span>View trip in motion →</a>

    <div class="hint">
      <p>Drag the map — the pin stays centered to set where you’re parked.</p>
      <button class="locate" aria-label="Use my location">
        <svg width="32" height="40" viewBox="0 0 32 40"><path fill="#cf9f5f" d="M29 5q3-1 2 2L19 36q-2 4-3-1V22q0-1-2-1L2 20q-4-1 0-3z"/></svg>
      </button>
    </div>
  </main>

  <section class="sheet">
    <div class="handle"></div>

    <div class="title-row">
      <h1>Where’s your car <em>parked?</em></h1>
      <button class="map-btn">MAP</button>
    </div>

    <div class="route-card">
      <button class="stop">
        <span class="marker"></span>
        <span class="stop-text">
          <strong>Habarakada</strong>
          <small>Habarakada, Colombo, Western Province</small>
        </span>
        <span class="gps">GPS</span>
        <svg class="chevron" width="18" height="32" viewBox="0 0 18 32"><path d="M3 3l13 13L3 29"/></svg>
      </button>
      <button class="stop to">
        <span class="marker ring"></span>
        <span class="stop-text"><strong>Where to?</strong></span>
        <svg class="chevron" width="18" height="32" viewBox="0 0 18 32"><path d="M3 3l13 13L3 29"/></svg>
      </button>
    </div>

    <div class="when">
      <button class="slot" disabled><b>Now</b><span class="caps">UNAVAILABLE</span></button>
      <button class="slot selected"><b>Tonight</b><span>8:12 pm</span></button>
      <button class="slot"><b>Schedule</b><span class="caps">PICK DATE</span></button>
    </div>

    <p class="summary">Pickup · tonight at 8:12&#8239;pm</p>

    <div class="time-row">
      <span id="time-label">Time</span>
      <button class="time-value" aria-describedby="time-label">8:12&#8239;pm</button>
    </div>

    <button class="confirm">Confirm pickup →</button>

    <nav class="tabs">
      <a class="tab active" href="#">
        <svg width="82" height="74" viewBox="0 0 82 74">
          <path d="M3 34L41 3l38 31" fill="none" stroke="#f8d28e" stroke-width="6" stroke-linecap="round" stroke-linejoin="round"/>
          <path fill="#f8d28e" d="M63 9q0-2 2-2h5q2 0 2 2v19l-9-7zM41 13l30 25v28q0 7-7 7H18q-7 0-7-7V38z"/>
          <path fill="#3a3b4f" d="M32 46q0-2 2-2h15q2 0 2 2v21H32z"/>
        </svg>
        Ride
      </a>
      <a class="tab" href="#">
        <svg width="70" height="74" viewBox="0 0 70 74">
          <rect x="1" y="5" width="68" height="63" rx="9" fill="#f1f1fe"/>
          <rect x="7" y="21" width="57" height="41" rx="4" fill="#181a2c"/>
          <path fill="#f1f1fe" d="M27 28h5v5h-5zM38 28h5v5h-5zM49 28h5v5h-5zM16 39h5v5h-5zM27 39h5v5h-5zM38 39h5v5h-5zM49 39h5v5h-5zM16 50h5v5h-5zM27 50h5v5h-5zM38 50h5v5h-5z"/>
        </svg>
        Trips
      </a>
      <a class="tab" href="#">
        <svg width="58" height="74" viewBox="0 0 58 74"><path fill="#f1f1fe" d="M27 3q2-1 4 0l23 10q3 1 3 5v27q0 12-9 18L31 71q-2 1-4 0L10 63Q1 57 1 45V18q0-4 3-5z"/></svg>
        SOS
      </a>
      <a class="tab" href="#">
        <svg width="60" height="74" viewBox="0 0 60 74" fill="#f1f1fe"><ellipse cx="30" cy="22" rx="14" ry="15"/><path d="M30 43c17 0 29 9 29 20q0 5-6 5H7q-6 0-6-5c0-11 12-20 29-20z"/></svg>
        Me
      </a>
    </nav>
  </section>

</div>
</body>
</html>
```
FILE: styles.css
```css
* { box-sizing: border-box; }
body {
  margin: 0;
  background: #151834;
  color: #f3e8d2;
  font-family: Inter, "Liberation Sans", sans-serif;
}
button { font: inherit; color: inherit; border: 0; margin: 0; padding: 0; cursor: pointer; }
a { color: inherit; text-decoration: none; }
p, h1 { margin: 0; }
svg { display: block; flex: none; }

.screen { min-height: 100vh; display: flex; flex-direction: column; }

/* map area */
.stage { position: relative; flex: 1; display: flex; flex-direction: column; min-height: 900px; }
.map { position: absolute; top: 0; left: 0; width: 100%; height: calc(100% + 100px); }
.park { fill: #24464f; }
.pond { fill: #24354f; }
.town { fill: #252d4b; }
.lake { fill: #020d29; }
.river { fill: none; stroke: #020d2b; stroke-width: 7; stroke-linejoin: round; }
.street { fill: none; stroke: #3d495c; stroke-width: 2px; vector-effect: non-scaling-stroke; stroke-linejoin: round; }
.street.wide { stroke-width: 3px; }
.road-case, .road { fill: none; stroke-linejoin: round; }
.road-case { stroke: #0c1220; stroke-width: 9; }
.road { stroke: #415a7d; stroke-width: 5; }

.map text { font-weight: 500; paint-order: stroke; stroke: #1b1e24; stroke-width: 8px; stroke-linejoin: round; }
.map .route text { font-size: 25px; fill: #1d2a36; stroke: none; text-anchor: middle; }
.area text { font-size: 35px; letter-spacing: 3px; fill: #adb4c6; }
.map .place text { font-size: 38px; font-weight: 400; fill: #8799a5; }
.map .place .shop { fill: #74a9ef; }
.map .place .food { fill: #dba16c; }
.map .place .hotel { fill: #b98ed3; }
.map .town-name { font-size: 45px; fill: #f2f3f7; }
.map .street-name { font-size: 32px; fill: #c5cbd8; }
.pickup-pin { filter: drop-shadow(0 12px 24px rgba(0, 0, 0, .5)); }

.status, .topbar, .trip, .hint { position: relative; }
.status { display: flex; justify-content: space-between; padding: 50px 120px 0 39px; color: #fff; }
.clock { display: flex; align-items: center; gap: 14px; padding-left: 130px; font-size: 51px; line-height: 50px; font-weight: 600; }
.back { display: flex; align-items: center; gap: 13px; margin-top: 11px; font-size: 34px; line-height: 40px; font-weight: 500; }
.signals { display: flex; align-items: center; gap: 23px; height: 92px; }

.topbar { display: flex; justify-content: space-between; align-items: center; padding: 70px 60px 0; }
.greeting {
  display: flex; align-items: center; gap: 28px;
  height: 112px; padding: 0 42px;
  border: 2px solid #33343f; border-radius: 56px;
  background: #292a36; font-size: 48px;
}
.bell {
  position: relative; display: grid; place-items: center;
  width: 122px; height: 122px;
  border: 2px solid #33343f; border-radius: 50%; background: #292a36;
}
.badge {
  position: absolute; top: -19px; right: -20px;
  width: 48px; height: 48px; border-radius: 50%;
  background: #eab36a; color: #0b0c22;
  font-size: 30px; line-height: 48px; font-weight: 700;
}
.trip {
  display: flex; align-items: center; gap: 24px;
  height: 126px; margin: 51px 60px 0; padding: 0 39px;
  border: 3px solid #56846f; border-radius: 38px;
  background: #262733; font-size: 42px; font-weight: 600;
}
.dot { width: 21px; height: 21px; border-radius: 50%; background: #86d1a0; }

.hint { display: flex; align-items: center; justify-content: space-between; margin-top: auto; padding: 0 60px 30px; }
.hint p { max-width: 940px; font-size: 36px; line-height: 44px; font-weight: 500; color: #606163; }
.locate {
  display: grid; place-items: center;
  width: 72px; height: 72px; border: 2px solid #262742; border-radius: 50%; background: #14142f;
}

/* bottom sheet */
.sheet {
  position: relative; display: flex; flex-direction: column;
  padding: 41px 58px 62px;
  border: 2px solid #252740; border-bottom: 0;
  border-radius: 96px 96px 0 0; background: #151834;
}
.handle {
  align-self: center; width: 138px; height: 15px; border-radius: 8px;
  background: linear-gradient(#f3e8d2, #77746f);
  box-shadow: 0 9px 30px rgba(243, 232, 210, .15);
}
.title-row { display: flex; justify-content: space-between; align-items: flex-end; margin-top: 58px; }
h1 { font-size: 76px; line-height: 92px; font-weight: 500; }
h1 em { font-style: normal; color: #eab36a; }
.map-btn {
  height: 65px; padding: 0 28px 0 31px;
  border: 2px solid #2b2d45; border-radius: 33px; background: #1c1f3b;
  color: #eab36a; font: 28px "DejaVu Sans Mono", monospace; letter-spacing: 3px;
}

.route-card { margin-top: 44px; border: 2px solid #2e304d; border-radius: 56px; background: #202344; }
.stop { display: flex; align-items: center; width: 100%; height: 197px; padding: 0 50px 0 45px; background: none; text-align: left; }
.stop + .stop { position: relative; height: 143px; padding-left: 42px; }
.stop + .stop::before { content: ""; position: absolute; top: 0; left: 99px; right: 0; height: 3px; background: #30324e; }
.marker { width: 30px; height: 30px; margin-right: 36px; border-radius: 8px; background: #eab36a; }
.marker.ring { width: 36px; height: 36px; margin-right: 33px; border: 6px solid #f3e8d2; border-radius: 50%; background: #6f6e7c; }
.stop-text { flex: 1; }
.stop-text strong, .stop-text small { display: block; }
.stop-text strong { font-size: 48px; line-height: 58px; font-weight: 600; }
.stop-text small { font-size: 39px; line-height: 60px; color: #6b6b7a; }
.stop.to strong { color: #6b6b7a; }
.gps { margin-right: 44px; font: 31px "DejaVu Sans Mono", monospace; color: #6b6b7a; }
.chevron path { fill: none; stroke: #6b6b7a; stroke-width: 5; stroke-linecap: round; stroke-linejoin: round; }

.when { display: grid; grid-template-columns: repeat(3, 1fr); gap: 22px; margin-top: 34px; }
.slot {
  height: 157px; padding: 4px 35px 0; text-align: left;
  border: 2px solid #2a2c46; border-radius: 38px; background: #1c1f3b;
}
.slot b, .slot span { display: block; }
.slot b { font-size: 42px; line-height: 54px; font-weight: 600; }
.slot span { font: 26px/44px "DejaVu Sans Mono", monospace; color: #74727a; }
.slot .caps { letter-spacing: 3px; }
.slot.selected { border: 3px solid #eab36a; padding: 4px 34px 0; background: #2f2c3a; }
.slot.selected b { color: #eab36a; }
.slot:disabled { border-color: #1a1d38; background: #171a36; cursor: default; }
.slot:disabled b, .slot:disabled span { color: #34354a; }

.summary { margin-top: 28px; font-size: 36px; line-height: 44px; color: #9d9893; }
.time-row { display: flex; justify-content: space-between; align-items: center; margin-top: 36px; font-size: 42px; font-weight: 500; }
.time-value { height: 114px; padding: 0 37px; border-radius: 57px; background: rgba(120, 120, 128, .28); color: #fff; font-size: 51px; font-weight: 400; }
.confirm {
  height: 168px; margin-top: 43px; border-radius: 50px;
  background: #eab46b; color: #0b0c22; font-size: 47px; font-weight: 600;
  box-shadow: 0 24px 90px rgba(234, 179, 106, .42);
}

.tabs {
  position: relative; display: grid; grid-template-columns: repeat(4, 1fr);
  height: 186px; margin: 61px 2px 0; padding: 10px 31px;
  border: 2px solid #343963; border-radius: 93px; background: #181a2c;
}
.tab {
  display: flex; flex-direction: column; align-items: center; justify-content: center; gap: 6px;
  margin: 0 -20px; border-radius: 82px;
  font-size: 30px; line-height: 38px; font-weight: 500; color: #f1f1fe;
}
.tab.active { background: #3a3b4f; color: #f8d28e; font-weight: 600; }
```
